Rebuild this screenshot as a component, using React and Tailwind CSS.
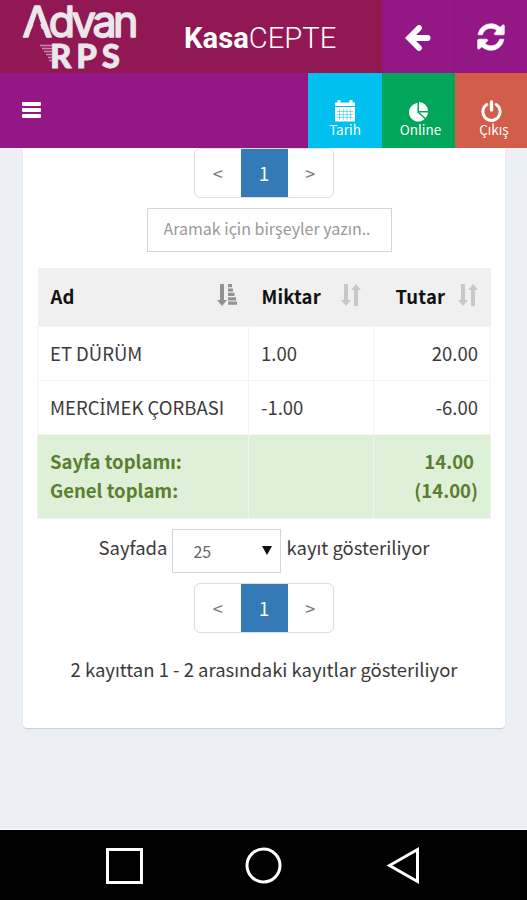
import React from 'react';

const rows = [
  { ad: 'ET DÜRÜM', miktar: '1.00', tutar: '20.00' },
  {
    // the CJK face has no dotted capital I
    ad: <>MERC<span className="font-['Noto_Sans'] text-[18px] leading-none">İ</span>MEK ÇORBASI</>,
    miktar: '-1.00',
    tutar: '-6.00'
  }
];

const Logo = () => (
  <svg width="184" height="73" viewBox="0 0 184 73" fill="#ebe6ea">
    <text x="22.500" y="37" fontFamily="Inter, sans-serif" fontSize="43" stroke="#ebe6ea" strokeWidth="1.600" strokeLinejoin="round" textLength="116" lengthAdjust="spacing">Advan</text>
    {/* opens the A below its apex */}
    <path d="M37 14 45 39H28.200z" fill="#921854" />
    <path d="M40 45.500h12M42 48.500h10M44 51.500h8M46 54.500h6M48 57.500h4M49 60.500h3" stroke="#c98bab" strokeWidth="1.500" />
    <text x="50" y="68" fontFamily="Lato, sans-serif" fontWeight="900" fontSize="33" stroke="#ebe6ea" strokeWidth=".8" textLength="70" lengthAdjust="spacing">RPS</text>
  </svg>
);

const RefreshIcon = () => (
  <svg width="28" height="28" viewBox="-40 88 1616 1616" fill="currentColor" stroke="currentColor" strokeWidth="40">
    <path d="M1511 1056q0 5-1 7-64 268-268 434.5t-478 166.5q-146 0-282.5-55t-243.5-157l-129 129q-19 19-45 19t-45-19-19-45v-448q0-26 19-45t45-19h448q26 0 45 19t19 45-19 45l-137 137q71 66 161 102t187 36q134 0 250-65t186-179q11-17 53-117 8-23 30-23h192q13 0 22.5 9.5t9.5 22.5zm25-800v448q0 26-19 45t-45 19h-448q-26 0-45-19t-19-45 19-45l138-138q-148-137-349-137-134 0-250 65t-186 179q-11 17-53 117-8 23-30 23h-199q-13 0-22.5-9.5t-9.5-22.5v-7q65-268 270-434.5t480-166.5q146 0 284 55.5t245 156.5l130-129q19-19 45-19t45 19 19 45z" />
  </svg>
);

const ArrowIcon = () => (
  <svg width="26" height="26" viewBox="0 0 26 26" fill="none" stroke="currentColor">
    <path d="M5 13h17.500" strokeLinecap="round" strokeWidth="6" />
    <path d="M14 3 4 13l10 10" strokeLinecap="round" strokeWidth="5.800" />
  </svg>
);

const CalendarIcon = () => (
  <svg width="20" height="22" viewBox="0 0 20 22" fill="white">
    <path d="M0 2.500h2.500V0h3v2.500h9V0h3v2.500H20V6H0z" />
    <path d="M0 7h20v14.500H0z" />
    <path d="M4.500 9v11M8.300 9v11M12 9v11M15.700 9v11M2 11.500h16M2 14.500h16M2 17.500h16" stroke="#00c0ef" strokeWidth=".5" />
  </svg>
);

const PieIcon = () => (
  <svg width="21" height="20" viewBox="0 0 21 20" fill="white">
    <path d="M9.500 1v9.500l7.200 6.500A9.300 9.300 0 1 1 9.500 1z" />
    <path d="M11 0a9 9 0 0 1 9 9h-9z" />
    <path d="M11.500 10.500H20a9 9 0 0 1-2.300 5.500z" />
  </svg>
);

const PowerIcon = () => (
  <svg width="21" height="22" viewBox="0 0 21 22" fill="none" stroke="white" strokeLinecap="round">
    <path d="M5.800 4.600a8.600 8.600 0 1 0 9.400 0" strokeWidth="3" />
    <path d="M10.500 2v8" strokeWidth="3.400" />
  </svg>
);

const SortIcon = () => (
  <svg width="20" height="22" viewBox="0 0 20 22" fill="#c8c8c8" className="-mt-1">
    <path d="M3 0h4v16h3l-5 6-5-6h3z" />
    <path d="M13 22h4V6h3l-5-6-5 6h3z" />
  </svg>
);

const SortedIcon = () => (
  <svg width="20" height="22" viewBox="0 0 20 22" fill="#929292" className="-mt-1">
    <path d="M3 0h4v16h3l-5 6-5-6h3z" />
    <path d="M11 0h4v3.200h-4zM11 4.400h5v3.200h-5zM11 8.800h6.500V12H11zM11 13.200h8v3.200h-8zM11 17.600h9v3.200h-9z" />
  </svg>
);

const Pagination = () => (
  <div className="flex h-[50px] w-[140px] overflow-hidden rounded-md border border-[#ddd] text-[18px] leading-[48px] text-[#777]">
    <span className="flex-1 text-center">&lt;</span>
    <span className="-my-px w-[47px] bg-[#337ab7] pt-px text-center text-[19px] text-white">1</span>
    <span className="flex-1 text-center">&gt;</span>
  </div>
);

const NavButton = ({ className, icon, label }) => (
  <button className={`flex h-[75px] flex-col items-center text-white ${className}`}>
    <span className="flex h-[49px] items-end">{icon}</span>
    <span className="text-[13.5px] leading-[15px]">{label}</span>
  </button>
);

const App = () => {
  return (
    <div className="flex h-[900px] w-[527px] flex-col overflow-hidden bg-[#ecf0f5] font-['Noto_Sans_CJK_SC','Noto_Sans',sans-serif] text-[#3b3b3b]">
      <header>
        <div className="flex h-[73px] bg-[#921854] text-white">
          <div className="w-[184px]"><Logo /></div>
          <h1 className="w-[198px] whitespace-nowrap pt-[18px] font-['Roboto'] text-[29.2px] font-light leading-[40px]">
            <b className="font-bold">Kasa</b>CEPTE
          </h1>
          <button className="flex w-[72px] items-center justify-center bg-[#931885] pt-0.5"><ArrowIcon /></button>
          <button className="flex w-[73px] items-center justify-center border-l border-[#8b1878] bg-[#931885] pt-px"><RefreshIcon /></button>
        </div>
        <nav className="flex h-[75px] bg-[#931885]">
          <div className="flex flex-1 flex-col gap-[2px] pl-[22px] pt-[29px]">
            <span className="h-[4px] w-[19px] rounded-[1px] bg-white" />
            <span className="h-[4px] w-[19px] rounded-[1px] bg-white" />
            <span className="h-[4px] w-[19px] rounded-[1px] bg-white" />
          </div>
          <NavButton className="w-[74px] bg-[#00c0ef]" icon={<CalendarIcon />} label="Tarih" />
          <NavButton className="w-[73px] bg-[#00a65a] pl-1" icon={<span className="pr-1"><PieIcon /></span>} label="Online" />
          <NavButton className="w-[72px] bg-[#d35d4b] pl-1.5" icon={<span className="pr-1.5"><PowerIcon /></span>} label="Çıkış" />
        </nav>
      </header>

      <main className="flex-1">
        <section className="mx-auto flex h-[580px] w-[482px] flex-col items-center rounded-b-[4px] bg-white pl-px shadow-[0_1px_1px_rgba(0,0,0,0.15)]">
          <Pagination />
          <input
            type="text"
            placeholder="Aramak için birşeyler yazın.."
            className="ml-[10px] mt-[10px] h-[44px] w-[245px] border border-[#d2d6de] px-4 pb-1 text-[16px] placeholder:text-[#999]"
          />

          <table className="mt-4 w-[453px] table-fixed border-collapse text-[18.5px] leading-[29px]">
            <colgroup>
              <col className="w-[211px]" />
              <col className="w-[125px]" />
              <col className="w-[117px]" />
            </colgroup>
            <thead>
              <tr className="h-[58px] bg-[#f0f0f0] text-left tracking-[0.2px] text-[#111]">
                <th className="pl-[13px] pr-3"><div className="flex items-center justify-between">Ad<SortedIcon /></div></th>
                <th className="px-[13px]"><div className="flex items-center justify-between">Miktar<SortIcon /></div></th>
                <th className="pl-[22px] pr-[13px]"><div className="flex items-center justify-between">Tutar<SortIcon /></div></th>
              </tr>
            </thead>
            <tbody>
              {rows.map((row) => (
                <tr key={row.tutar} className="h-[54px]">
                  <td className="whitespace-nowrap border border-[#f4f4f4] px-3">{row.ad}</td>
                  <td className="border border-[#f4f4f4] px-3">{row.miktar}</td>
                  <td className="border border-[#f4f4f4] px-3 text-right">{row.tutar}</td>
                </tr>
              ))}
              <tr className="h-[84px] bg-[#dff0d8] font-bold text-[#5a7f2e]">
                <td className="border border-[#f0f4ee] px-3">Sayfa toplamı:<br />Genel toplam:</td>
                <td className="border border-[#f0f4ee]" />
                <td className="border border-[#f0f4ee] px-3 text-right"><span className="pr-1">14.00</span><br />(14.00)</td>
              </tr>
            </tbody>
          </table>

          <div className="mt-[10px] flex h-[44px] items-center gap-[5px] whitespace-nowrap text-[18.5px]">
            <span className="pb-1.5">Sayfada</span>
            <button className="flex h-[44px] w-[109px] items-center justify-between border border-[#d2d6de] pl-5 pr-2 text-[16px] text-[#666]">
              25
              <svg width="10" height="9" viewBox="0 0 10 9" fill="#111"><path d="M0 0h10L5 9z" /></svg>
            </button>
            <span className="pb-1.5">kayıt gösteriliyor</span>
          </div>
          <div className="mt-[10px]"><Pagination /></div>
          <p className="mt-[22px] whitespace-nowrap text-[18.5px] leading-[29px]">2 kayıttan 1 - 2 arasındaki kayıtlar gösteriliyor</p>
        </section>
      </main>

      <footer className="h-[71px] border-t border-white bg-black">
        <svg width="527" height="70" viewBox="0 0 527 70" fill="none" stroke="white" strokeWidth="3">
          <rect x="107.500" y="19.500" width="34" height="33" />
          <circle cx="263.500" cy="35.500" r="16.500" />
          <path d="M389.500 35.500 417.500 19.500v32z" />
        </svg>
      </footer>
    </div>
  );
};

export default App;
